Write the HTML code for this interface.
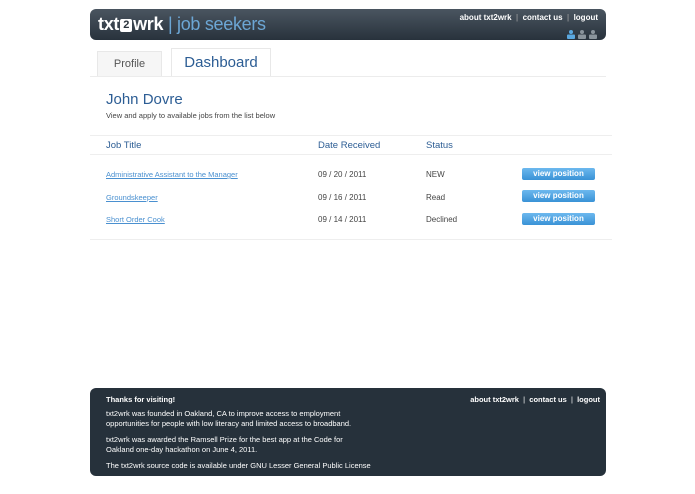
<!DOCTYPE html>
<html><head><meta charset="utf-8"><style>
body{margin:0;background:#fff;font-family:"Liberation Sans",sans-serif;width:695px;height:494px;position:relative;overflow:hidden}
.a{position:absolute}
.hdr{left:90px;top:9px;width:516px;height:31px;border-radius:6px;background:linear-gradient(#4a5560,#28323c)}
.logo{left:8px;top:5px;color:#fff;font-size:18px;font-weight:bold;letter-spacing:-0.3px}
.logo .b{display:inline-block;background:#fff;color:#2b343d;font-size:11px;width:12px;height:13px;line-height:13px;text-align:center;border-radius:2px;vertical-align:2px;margin:0 1px}
.logo .js{font-weight:normal;color:#6ca6d4}
.nav{color:#fff;font-size:8px;font-weight:bold}
.tab{border:1px solid #e8e8e8;border-bottom:none;box-sizing:border-box}
.lnk{color:#4a90d0;text-decoration:underline;font-size:7.5px}
.t{font-size:8px;color:#444}
.btn{width:73px;height:12px;border-radius:2px;background:linear-gradient(#6cb8ee,#3a92d6);color:#fff;font-size:8px;font-weight:bold;text-align:center;line-height:11px}
.ft{left:90px;top:388px;width:516px;height:88px;border-radius:6px;background:#26313b;color:#fff;font-size:7.5px}
.ft p{margin:0;position:absolute;left:16px;line-height:10px}
</style></head><body>
<div class="a hdr">
<div class="a logo">txt<span class="b">2</span>wrk <span class="js">| job seekers</span></div>
<div class="a nav" style="right:8px;top:4px">about txt2wrk <span style="font-weight:normal;color:#aaa">&nbsp;|&nbsp;</span> contact us <span style="font-weight:normal;color:#aaa">&nbsp;|&nbsp;</span> logout</div>
<div class="a" style="right:8px;top:17px;width:31px;height:9px">
<svg width="31" height="9"><g fill="#5aa8e0"><circle cx="4" cy="2" r="2"/><rect x="0" y="4.5" width="8" height="4.5" rx="1"/></g><g fill="#8a949c"><circle cx="15" cy="2" r="2"/><rect x="11" y="4.5" width="8" height="4.5" rx="1"/><circle cx="26" cy="2" r="2"/><rect x="22" y="4.5" width="8" height="4.5" rx="1"/></g></svg></div>
</div>
<div class="a tab" style="left:97px;top:51px;width:65px;height:25px;background:#f6f6f6;font-size:11px;color:#555;text-align:center;line-height:25px">Profile</div>
<div class="a tab" style="left:171px;top:48px;width:100px;height:29px;background:#fff;font-size:15px;color:#2c5d94;text-align:center;line-height:28px">Dashboard</div>
<div class="a" style="left:90px;top:76px;width:516px;height:1px;background:#ececec"></div>
<div class="a" style="left:106px;top:91px;font-size:15px;color:#2c5d94">John Dovre</div>
<div class="a" style="left:106px;top:111px;font-size:7.5px;color:#444">View and apply to available jobs from the list below</div>
<div class="a" style="left:90px;top:135px;width:522px;height:1px;background:#eee"></div>
<div class="a" style="left:106px;top:140px;font-size:9.5px;color:#2c5d94">Job Title</div>
<div class="a" style="left:318px;top:140px;font-size:9.5px;color:#2c5d94">Date Received</div>
<div class="a" style="left:426px;top:140px;font-size:9.5px;color:#2c5d94">Status</div>
<div class="a" style="left:90px;top:154px;width:522px;height:1px;background:#eee"></div>
<div class="a lnk" style="left:106px;top:170px">Administrative Assistant to the Manager</div>
<div class="a t" style="left:318px;top:170px">09 / 20 / 2011</div>
<div class="a t" style="left:426px;top:170px">NEW</div>
<div class="a btn" style="left:522px;top:168px">view position</div>
<div class="a lnk" style="left:106px;top:193px">Groundskeeper</div>
<div class="a t" style="left:318px;top:193px">09 / 16 / 2011</div>
<div class="a t" style="left:426px;top:193px">Read</div>
<div class="a btn" style="left:522px;top:190px">view position</div>
<div class="a lnk" style="left:106px;top:215px">Short Order Cook</div>
<div class="a t" style="left:318px;top:215px">09 / 14 / 2011</div>
<div class="a t" style="left:426px;top:215px">Declined</div>
<div class="a btn" style="left:522px;top:213px">view position</div>
<div class="a" style="left:90px;top:239px;width:522px;height:1px;background:#eee"></div>
<div class="a ft">
<p style="top:7px;font-weight:bold">Thanks for visiting!</p>
<p style="top:7px;left:auto;right:6px;font-weight:bold">about txt2wrk <span style="font-weight:normal">&nbsp;|&nbsp;</span> contact us <span style="font-weight:normal">&nbsp;|&nbsp;</span> logout</p>
<p style="top:21px">txt2wrk was founded in Oakland, CA to improve access to employment<br>opportunities for people with low literacy and limited access to broadband.</p>
<p style="top:47px">txt2wrk was awarded the Ramsell Prize for the best app at the Code for<br>Oakland one-day hackathon on June 4, 2011.</p>
<p style="top:73px">The txt2wrk source code is available under GNU Lesser General Public License</p>
</div>
</body></html>
